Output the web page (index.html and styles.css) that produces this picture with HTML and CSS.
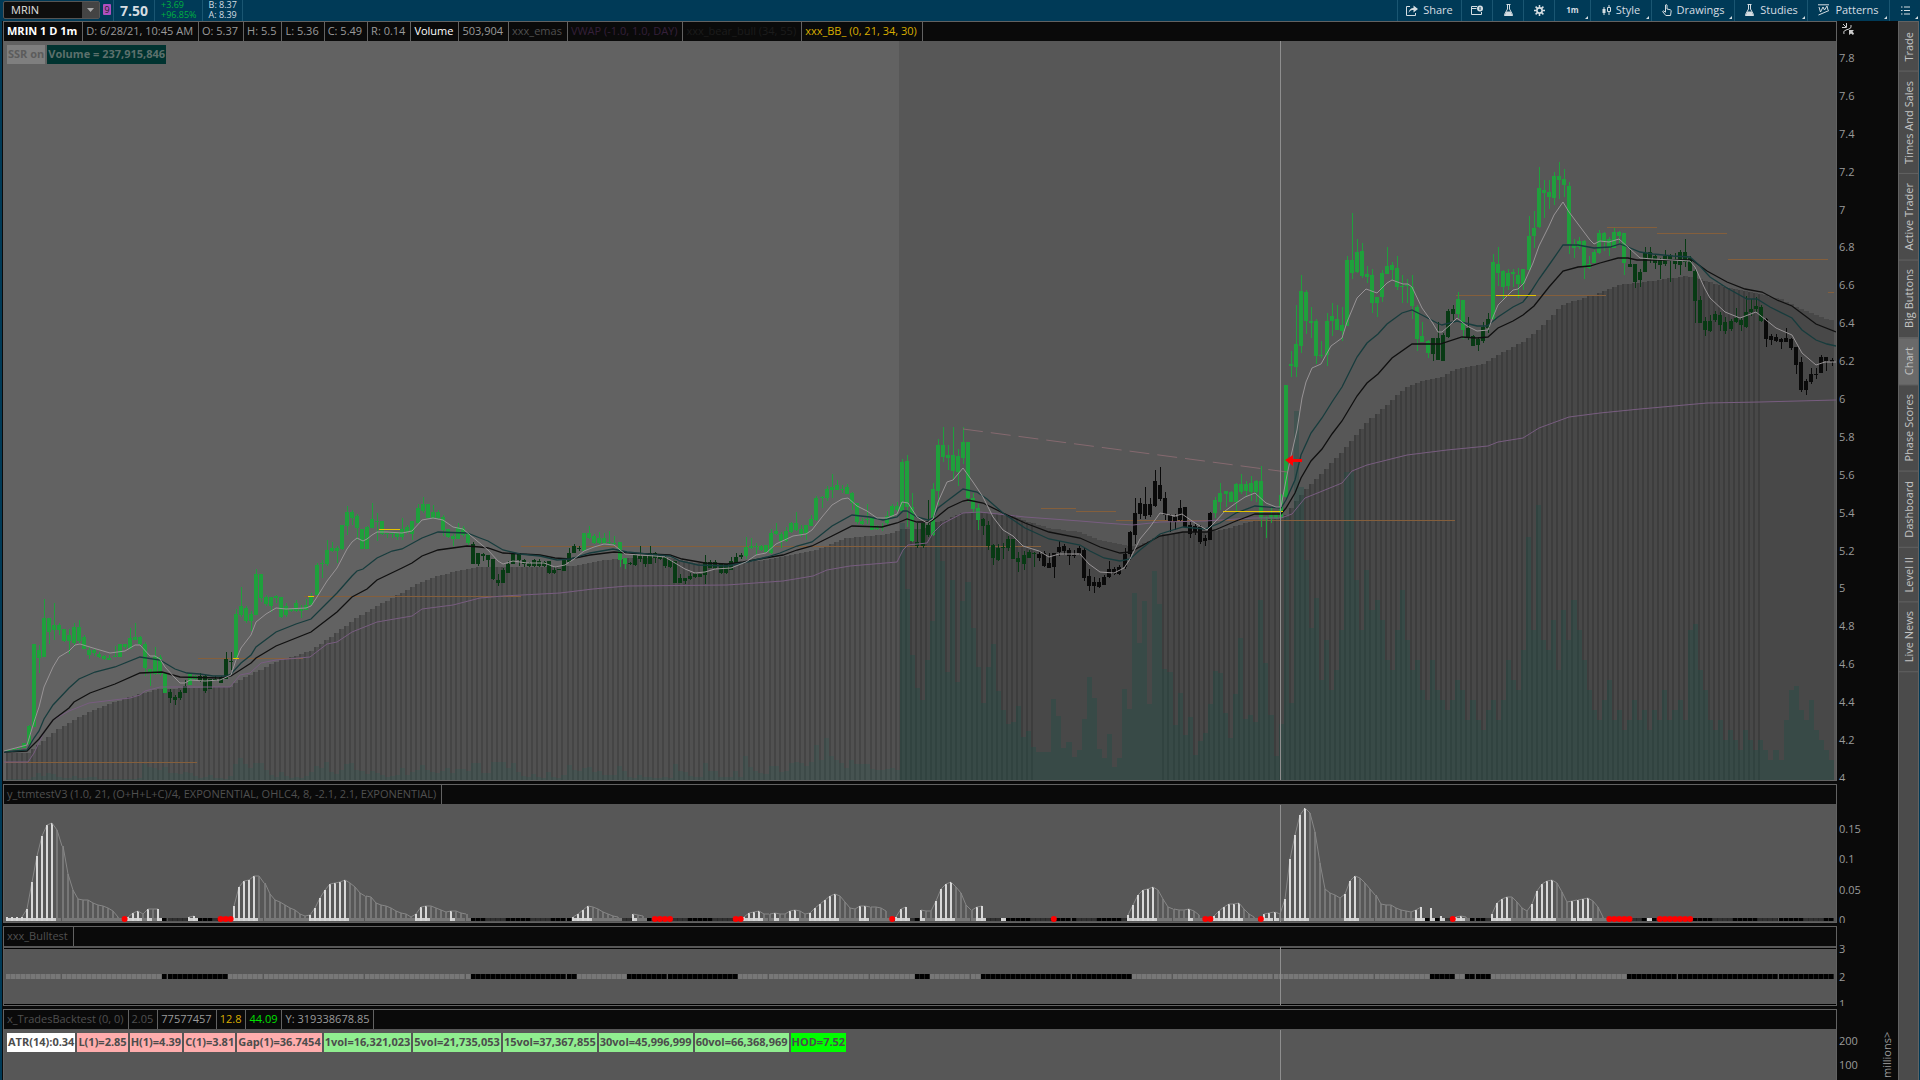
FILE: index.html
```html
<!DOCTYPE html>
<html lang="en">
<head>
    <meta charset="UTF-8">
    <meta name="viewport" content="width=device-width, initial-scale=1.0">
    <title>MRIN 1 D 1m</title>
    <link rel="stylesheet" href="styles.css">
</head>
<body>
    <header class="topbar">
        <div class="symbol-box">
            <input type="text" class="symbol" value="MRIN" aria-label="Symbol">
            <button class="symbol-drop" aria-label="Symbol list"><svg width="7" height="4" viewBox="0 0 7 4"><path d="M0 0h7L3.500 4z" fill="#aaa"/></svg></button>
        </div>
        <button class="link-badge" aria-label="Link group">9</button>
        <div class="last-price">7.50</div>
        <div class="quote quote-change"><span>+3.69</span><span>+96.85%</span></div>
        <div class="quote"><span>B: 8.37</span><span>A: 8.39</span></div>
        <nav class="tools">
            <button class="tool share">
                <svg width="12" height="11" viewBox="0 0 12 11"><path d="M4 1.500H.5v9h9V8" fill="none" stroke="#d5dde2"/><path d="M2.500 8C3 4.500 5 3 7.500 3V.5L12 4 7.500 7.500V5C5.500 5 4 5.500 2.500 8z" fill="#d5dde2"/></svg>
                Share
            </button>
            <button class="tool" aria-label="Snapshot">
                <svg width="12" height="11" viewBox="0 0 12 11"><path d="M6 1.500H.5v8h10V7M.5 3.500h5" fill="none" stroke="#d5dde2"/><circle cx="9" cy="3.500" r="3" fill="#d5dde2"/><path d="M9 2v3" stroke="#003a57"/></svg>
            </button>
            <button class="tool" aria-label="Studies list">
                <svg width="11" height="12" viewBox="0 0 11 12"><path d="M3.500.5h4M4.500.5v4.500L1.500 10.500v1h8v-1L6.500 5V.5" fill="none" stroke="#d5dde2"/><path d="M3.500 7.500h4l2 4h-8z" fill="#d5dde2"/></svg>
            </button>
            <button class="tool" aria-label="Settings">
                <svg width="11" height="11" viewBox="0 0 11 11"><path d="M5.500 0v11M0 5.500h11M1.600 1.600l7.800 7.800M9.400 1.600L1.600 9.400" stroke="#d5dde2" stroke-width="1.500"/><circle cx="5.500" cy="5.500" r="2.600" fill="#003a57" stroke="#d5dde2" stroke-width="1.600"/></svg>
            </button>
            <button class="tool corner timeframe">1m</button>
            <button class="tool corner style">
                <svg width="9" height="11" viewBox="0 0 9 11"><path d="M2 2v8M7 0v10" stroke="#d5dde2"/><path d="M.5 4h3v4h-3z" fill="#d5dde2"/><path d="M5.500 2.500h3v4h-3z" fill="#003a57" stroke="#d5dde2"/></svg>
                Style
            </button>
            <button class="tool corner drawings">
                <svg width="10" height="12" viewBox="0 0 10 12"><path d="M3.500 8V1q.8-1 1.500 0v4l3.500.8q.8.400.7 1.200L8.500 11.500H3.800L.6 7.500q.6-1 1.400-.4l1.500 1.400" fill="none" stroke="#d5dde2"/></svg>
                Drawings
            </button>
            <button class="tool corner studies">
                <svg width="11" height="12" viewBox="0 0 11 12"><path d="M3.500.5h4M4.500.5v4.500L1.500 10.500v1h8v-1L6.500 5V.5" fill="none" stroke="#d5dde2"/><path d="M3.500 7.500h4l2 4h-8z" fill="#d5dde2"/></svg>
                Studies
            </button>
            <button class="tool corner patterns">
                <svg width="12" height="12" viewBox="0 0 12 12"><path d="M0 .8h11M.5 11L11 6.500M1 3l1.500 5L5 3l1.500 3L9 2l1 4" fill="none" stroke="#d5dde2"/></svg>
                Patterns
            </button>
            <button class="tool corner" aria-label="Menu">
                <svg width="9" height="9" viewBox="0 0 9 9"><path d="M0 1h1.500M0 4.500h1.500M0 8h1.500M3 1h6M3 4.500h6M3 8h6" stroke="#d5dde2"/></svg>
            </button>
        </nav>
    </header>

    <div class="workspace">
        <main class="panels">
            <!-- price -->
            <section class="panel panel-price">
                <div class="pane">
                    <div class="info">
                        <span class="white bold">MRIN 1 D 1m</span>
                        <span>D: 6/28/21, 10:45 AM</span>
                        <span>O: 5.37</span>
                        <span>H: 5.5</span>
                        <span>L: 5.36</span>
                        <span>C: 5.49</span>
                        <span>R: 0.14</span>
                        <span class="white">Volume</span>
                        <span>503,904</span>
                        <span class="dim">xxx_emas</span>
                        <span class="purple">VWAP (-1.0, 1.0, DAY)</span>
                        <span class="faint">xxx_bear_bull (34, 55)</span>
                        <span class="yellow">xxx_BB_ (0, 21, 34, 30)</span>
                    </div>
                    <div class="plot">
                        <svg id="price" viewBox="4 41 1832 739" preserveAspectRatio="none"></svg>
                        <div class="labels">
                            <span class="ssr">SSR on</span>
                            <span class="vol">Volume = 237,915,846</span>
                        </div>
                    </div>
                </div>
                <div class="axis">
                    <svg class="axis-icon" width="12" height="12" viewBox="0 0 12 12"><path d="M1 1l3 3M4.500 0v4.500H0M2 11q-1.500-3 2-4l3-1q3-1 2-4" fill="none" stroke="#ccc"/><path d="M7 7h5L10.500 8.500 12 10.500 11 12 9 10.500 7 12z" fill="#ccc"/></svg>
                    <ul class="scale">
                        <li>7.8</li><li>7.6</li><li>7.4</li><li>7.2</li><li>7</li>
                        <li>6.8</li><li>6.6</li><li>6.4</li><li>6.2</li><li>6</li>
                        <li>5.8</li><li>5.6</li><li>5.4</li><li>5.2</li><li>5</li>
                        <li>4.8</li><li>4.6</li><li>4.4</li><li>4.2</li><li>4</li>
                    </ul>
                </div>
            </section>

            <!-- squeeze histogram -->
            <section class="panel panel-ttm">
                <div class="pane">
                    <div class="info"><span class="dim">y_ttmtestV3 (1.0, 21, (O+H+L+C)/4, EXPONENTIAL, OHLC4, 8, -2.1, 2.1, EXPONENTIAL)</span></div>
                    <div class="plot"><svg id="ttm" viewBox="4 804 1832 118" preserveAspectRatio="none"></svg></div>
                </div>
                <div class="axis">
                    <ul class="scale"><li>0.15</li><li>0.1</li><li>0.05</li><li>0</li></ul>
                </div>
            </section>

            <!-- bull test -->
            <section class="panel panel-bull">
                <div class="pane">
                    <div class="info"><span class="dim">xxx_Bulltest</span></div>
                    <div class="plot"><svg id="bull" viewBox="4 946 1832 59" preserveAspectRatio="none"></svg></div>
                </div>
                <div class="axis">
                    <ul class="scale"><li>3</li><li>2</li><li>1</li></ul>
                </div>
            </section>

            <!-- backtest -->
            <section class="panel panel-trades">
                <div class="pane">
                    <div class="info">
                        <span class="dim">x_TradesBacktest (0, 0)</span>
                        <span class="dim">2.05</span>
                        <span>77577457</span>
                        <span class="yellow">12.8</span>
                        <span class="green">44.09</span>
                        <span>Y: 319338678.85</span>
                    </div>
                    <div class="plot">
                        <svg id="trades" viewBox="4 1029 1832 51" preserveAspectRatio="none"></svg>
                        <div class="labels">
                            <span class="plain">ATR(14):0.34</span>
                            <span class="pink">L(1)=2.85</span>
                            <span class="pink">H(1)=4.39</span>
                            <span class="pink">C(1)=3.81</span>
                            <span class="pink">Gap(1)=36.7454</span>
                            <span class="mint">1vol=16,321,023</span>
                            <span class="mint">5vol=21,735,053</span>
                            <span class="mint">15vol=37,367,855</span>
                            <span class="mint">30vol=45,996,999</span>
                            <span class="mint">60vol=66,368,969</span>
                            <span class="lime">HOD=7.52</span>
                        </div>
                    </div>
                </div>
                <div class="axis">
                    <ul class="scale"><li>200</li><li>100</li></ul>
                    <div class="unit">millions&gt;</div>
                </div>
            </section>
        </main>

        <nav class="side-tabs">
            <button>Trade</button>
            <button>Times And Sales</button>
            <button>Active Trader</button>
            <button>Big Buttons</button>
            <button class="active">Chart</button>
            <button>Phase Scores</button>
            <button>Dashboard</button>
            <button>Level II</button>
            <button>Live News</button>
        </nav>
    </div>

    <script src="script.js"></script>
</body>
</html>
```
FILE: styles.css
```css
* {
    box-sizing: border-box;
}
body {
    margin: 0;
    height: 100vh;
    overflow: hidden;
    display: flex;
    flex-direction: column;
    background-color: #003a57;
    color: #9a9a9a;
    font-family: 'Open Sans', 'Noto Sans', sans-serif;
    font-size: 11px;
    line-height: 14px;
}
button, input {
    font: inherit;
    color: inherit;
    margin: 0;
    padding: 0;
    border: none;
    background: none;
}

/* top bar */
.topbar {
    height: 21px;
    flex: none;
    display: flex;
    align-items: stretch;
    background-color: #003a57;
    color: #d5dde2;
}
.symbol-box {
    width: 97px;
    height: 18px;
    margin: 1px 0 0 3px;
    display: flex;
    border: 1px solid #555;
    border-radius: 2px;
    background-color: #0e0e0e;
}
.symbol {
    flex: 1;
    min-width: 0;
    padding-left: 7px;
    color: #e0e0e0;
}
.symbol-drop {
    width: 17px;
    background-color: #444;
    display: flex;
    align-items: center;
    justify-content: center;
}
.link-badge {
    width: 8px;
    height: 11px;
    margin: 4px 0 0 3px;
    background-color: #b04fc0;
    color: #222;
    font-size: 9px;
    line-height: 11px;
    border-radius: 1px;
}
.last-price {
    margin-left: 2px;
    padding: 0 6px;
    font-size: 14px;
    font-weight: bold;
    line-height: 22px;
    border-left: 1px solid #1a5672;
}
.quote {
    display: flex;
    flex-direction: column;
    padding: 0 5px 0 6px;
    font-size: 9px;
    line-height: 10px;
    border-left: 1px solid #1a5672;
}
.quote:last-of-type {
    border-right: 1px solid #1a5672;
}
.quote-change {
    color: #00b140;
}
.tools {
    margin-left: auto;
    display: flex;
}
.tool {
    position: relative;
    width: 31px;
    display: flex;
    align-items: center;
    justify-content: center;
    gap: 5px;
    padding-bottom: 1px;
    border-left: 1px solid #1a5672;
}
.corner::after {
    content: "";
    position: absolute;
    right: 2px;
    bottom: 2px;
    border-left: 3px solid transparent;
    border-bottom: 3px solid #d5dde2;
}
.share { width: 64px; }
.timeframe {
    width: 36px;
    font-size: 8px;
    font-weight: bold;
}
.style { width: 61px; }
.drawings { width: 83px; }
.studies { width: 73px; }
.patterns { width: 82px; }

/* chart panels */
.workspace {
    flex: 1;
    min-height: 0;
    display: flex;
    padding: 0 1px 0 2px;
}
.panels {
    flex: 1;
    min-width: 0;
    display: flex;
    flex-direction: column;
    gap: 3px;
    padding-left: 1px;
    background-color: #0a0a0a;
}
.panel {
    display: flex;
    flex: none;
    overflow: hidden;
}
.panel-price {
    flex: 1;
    min-height: 0;
}
.panel-ttm { height: 139px; }
.panel-bull { height: 80px; }
.panel-trades { height: 71px; }
.pane {
    flex: 1;
    min-width: 0;
    display: flex;
    flex-direction: column;
    border: 1px solid #626262;
}
.panel-trades .pane {
    border-bottom: none;
}
.info {
    height: 19px;
    flex: none;
    display: flex;
    background-color: #0a0a0a;
    line-height: 18px;
    white-space: nowrap;
}
.info span {
    padding: 0 5px 0 3px;
    border-right: 1px solid #626262;
}
.panel-trades .info span {
    padding-right: 4px;
}
.info .white { color: #fff; }
.info .bold { font-weight: bold; }
.info .dim { color: #505050; }
.info .purple { color: #35203a; }
.info .faint { color: #1c1c1c; }
.info .yellow { color: #d9ad00; }
.info .green { color: #00e000; }
.plot {
    position: relative;
    flex: 1;
    min-height: 0;
    background-color: #575757;
}
.plot svg {
    display: block;
    width: 100%;
    height: 100%;
}
.labels {
    position: absolute;
    top: 4px;
    left: 3px;
    display: flex;
    gap: 2px;
    font-weight: bold;
    line-height: 18px;
    white-space: nowrap;
    color: #4c4c4c;
}
.labels span {
    height: 19px;
    padding: 0 1px;
}
.labels .ssr {
    background-color: #7f7f7f;
    color: #5c5c5c;
}
.labels .vol {
    background-color: #003330;
    color: #5c706c;
}
.plain { background-color: #fff; }
.pink { background-color: #ffadad; }
.mint { background-color: #90ee90; }
.lime { background-color: #00ff00; }

/* value axis */
.axis {
    width: 61px;
    flex: none;
    display: flex;
    flex-direction: column;
    background-color: #0a0a0a;
}
.axis-icon {
    flex: none;
    margin: 2px 0 0 5px;
}
.scale {
    flex: 1;
    margin: 0;
    padding: 0 0 0 2px;
    list-style: none;
    display: flex;
    flex-direction: column;
    justify-content: space-between;
}
.panel-price .scale { margin: 16px 0 -4px; }
.panel-ttm .scale { margin: 38px 0 -4px; }
.panel-bull .scale { margin: 16px 0 -5px; }
.panel-trades .axis { flex-direction: row; }
.panel-trades .scale {
    margin-top: 25px;
    justify-content: flex-start;
    gap: 10px;
}
.unit {
    margin: 23px 4px 0 0;
    writing-mode: vertical-rl;
    transform: rotate(180deg);
    text-align: right;
}

/* right tabs */
.side-tabs {
    width: 21px;
    flex: none;
    display: flex;
    flex-direction: column;
    padding-top: 1px;
    background-color: #4b4b4b;
    border: 1px solid #626262;
    border-bottom: none;
    color: #c4c4c4;
}
.side-tabs button {
    writing-mode: vertical-rl;
    transform: rotate(180deg);
    line-height: 19px;
    padding: 9px 0;
    border-top: 1px solid #626262;
}
.side-tabs .active {
    background-color: #6a6a6a;
}
```
FILE: script.js
```js
const STEP = 5.05;
const barX = i => 8.45 + i * STEP;

// high, body top, body bottom, low for each minute bar
const candles = `
750 750 750 750,749 749 750 750,748 748 749 749,743 743 748 748,725 726 744 745,644 644 727 727,645 650 658 673,599 618 657 657,
618 618 632 644,603 625 630 640,623 625 630 635,629 629 641 642,629 635 641 654,623 627 643 645,620 627 641 643,635 637 649 649,
647 650 655 659,649 650 653 656,652 654 657 658,655 656 659 660,655 658 660 660,646 656 657 657,644 644 657 657,644 644 647 649,
628 638 649 649,623 637 640 640,636 637 644 646,642 644 668 676,669 669 673 686,647 656 674 675,655 657 674 676,673 673 693 693,
689 692 698 703,695 697 700 705,690 692 698 700,680 686 693 693,673 674 685 685,675 676 679 681,673 676 681 682,675 676 691 693,
679 679 689 689,676 679 681 681,676 677 683 683,652 659 679 679,652 661 662 670,609 614 659 659,587 606 615 617,606 608 621 623,
611 614 621 631,569 574 615 615,574 574 598 602,595 597 604 606,597 597 606 612,595 596 598 603,597 597 617 618,603 606 615 617,
608 609 611 612,600 603 611 612,605 609 611 618,599 605 610 610,593 596 605 606,563 565 595 595,560 563 564 578,540 550 564 566,
542 548 551 552,546 548 551 563,525 525 549 550,506 512 526 535,510 512 518 525,514 516 528 540,529 529 549 549,526 527 549 549,
503 519 528 528,513 521 522 541,521 521 534 535,533 533 534 538,532 533 534 538,532 533 537 540,518 529 537 540,525 527 532 534,
521 521 534 540,504 508 523 524,497 504 511 513,504 504 518 518,505 512 518 519,510 512 518 519,515 517 530 536,529 529 537 538,
534 536 539 546,523 527 539 539,526 528 535 537,533 533 543 545,542 544 564 564,553 553 564 566,553 554 556 561,555 555 560 567,
559 559 579 580,574 580 583 586,568 570 583 583,561 564 573 573,553 553 564 564,553 553 560 566,559 560 564 567,562 563 566 567,
559 560 566 567,559 561 566 567,561 562 566 567,561 561 573 574,567 570 573 574,569 569 570 570,559 559 571 571,548 553 562 563,
544 546 553 553,546 548 549 551,533 533 551 551,526 533 538 539,534 536 543 544,532 538 543 544,533 538 543 544,531 542 543 545,
536 543 544 545,542 542 560 567,558 558 564 569,562 563 564 565,553 555 565 566,546 556 559 562,556 556 564 567,546 553 564 564,
552 553 558 563,555 555 559 560,556 557 566 568,560 560 567 568,561 561 583 583,574 578 583 583,578 578 581 584,573 576 579 580,
573 574 577 578,574 574 577 577,555 562 575 584,560 562 568 568,560 562 568 569,563 563 573 574,564 564 573 574,557 561 570 570,
553 557 563 563,553 555 557 559,537 547 556 559,538 546 548 549,543 546 547 555,545 546 550 551,545 545 552 552,529 533 553 554,
523 531 534 535,532 534 541 548,527 531 541 542,522 523 532 533,512 523 530 531,525 529 534 537,525 525 533 540,515 519 526 526,
496 498 520 521,496 497 498 508,486 489 498 501,474 487 490 498,480 485 490 490,485 489 490 493,484 487 494 494,492 493 503 510,
503 503 522 524,518 521 524 525,504 519 520 524,518 518 530 530,525 526 529 530,523 527 528 531,511 516 523 526,504 506 516 517,
502 506 510 512,459 462 511 512,455 461 507 527,493 507 541 542,523 542 546 548,523 523 546 548,500 525 535 537,483 489 535 536,
439 445 491 505,427 445 457 462,445 455 458 470,427 455 471 480,449 456 472 486,427 442 458 464,442 442 498 502,493 498 509 513,
504 508 520 530,518 519 526 535,521 525 546 550,544 545 558 565,544 548 560 561,543 547 548 559,536 539 548 551,539 539 559 559,
552 558 562 572,551 555 564 570,550 552 558 558,552 553 554 567,551 554 558 561,551 553 566 567,553 563 568 568,553 553 567 578,
541 547 552 556,544 546 551 555,548 550 556 565,550 555 556 558,546 548 553 555,548 550 578 581,569 576 586 591,577 582 586 593,
578 582 587 588,575 577 585 585,561 569 577 578,567 569 574 575,565 567 574 575,548 554 567 569,531 532 554 560,498 513 535 544,
498 503 514 519,487 504 516 519,498 504 515 517,470 481 506 507,467 485 499 501,492 498 515 520,514 515 521 532,514 517 522 530,
500 508 520 521,507 507 527 528,522 525 534 538,524 526 532 535,525 527 542 544,535 538 541 546,512 513 540 540,497 500 513 518,
483 493 502 510,491 491 494 507,491 492 502 502,483 484 502 513,474 484 492 494,481 484 491 496,476 483 492 501,480 481 492 502,
466 481 518 527,516 517 518 538,508 515 518 523,513 515 518 519,494 495 518 518,385 385 497 498,351 364 366 377,305 344 367 377,
275 291 346 353,290 292 321 334,307 321 323 338,319 321 356 364,341 355 356 358,313 321 355 366,303 316 321 336,305 319 330 330,
307 325 331 341,256 260 326 326,213 260 273 279,239 252 272 273,243 251 276 278,266 274 277 283,269 275 303 313,297 297 303 317,
270 273 297 302,247 266 274 274,262 265 270 280,256 268 287 290,275 286 287 303,279 285 286 303,275 287 306 319,305 307 339 351,
322 336 342 342,340 341 353 358,338 338 354 361,322 338 360 360,333 335 361 361,309 311 337 338,305 309 314 320,292 299 314 318,
300 300 330 339,317 328 338 340,335 336 346 346,337 339 345 351,322 327 341 343,313 319 328 333,254 262 319 320,247 264 273 286,
270 271 287 300,269 273 286 290,269 272 274 287,268 275 284 298,269 269 284 290,216 236 270 271,211 228 236 248,167 188 227 228,
180 190 193 218,180 192 197 209,172 176 198 205,162 176 180 199,169 179 185 197,182 186 244 254,239 244 248 258,237 241 247 249,
240 241 266 279,256 264 268 269,250 252 263 263,230 233 253 254,232 233 242 251,237 239 247 256,228 232 248 248,231 232 236 244,
233 233 263 275,250 264 267 267,264 264 282 288,269 272 280 287,247 253 272 272,247 252 259 263,255 256 263 269,258 260 265 279,
250 256 264 266,254 256 260 282,253 260 264 269,250 252 265 275,239 252 262 267,256 258 271 271,269 271 301 323,296 300 323 323,
317 321 330 336,315 321 331 332,311 314 320 322,312 315 325 331,317 322 331 334,319 321 329 331,308 318 322 323,318 320 325 331,
296 312 327 328,299 309 312 316,297 306 309 312,305 307 321 322,318 319 339 347,334 336 340 345,334 337 341 342,338 339 342 349,
328 338 342 342,338 339 348 350,347 347 365 374,357 362 390 392,379 381 390 395,368 374 382 384,368 374 375 379,355 357 373 373,
357 357 361 371,358 360 362 366`.split(',').map(c => c.trim().split(' ').map(Number));

// bars that are not bright green
const darkRanges = [[32, 35], [38, 44], [92, 113], [123, 145], [180, 182], [193, 203], [282, 286], [289, 293], [321, 347]];
const blackRanges = [[204, 238], [348, 361]];

// volume bar heights
const volume = [
    1, 1, 1, 1, 1, 3, 7, 4, 7, 6, 3, 2, 2, 4, 2, 2, 3, 3, 1, 1, 1, 1, 1, 1, 1, 1, 2, 16, 13, 12,
    10, 13, 7, 7, 6, 8, 7, 4, 2, 3, 5, 2, 2, 1, 4, 16, 22, 16, 12, 17, 17, 10, 5, 3, 8, 4, 2, 3, 2, 4,
    8, 14, 12, 18, 8, 6, 10, 16, 17, 10, 9, 6, 9, 7, 5, 3, 4, 5, 12, 5, 8, 10, 15, 10, 8, 7, 9, 12, 7, 11,
    11, 9, 17, 17, 7, 7, 18, 18, 18, 12, 17, 8, 4, 3, 6, 3, 2, 8, 3, 2, 5, 15, 10, 9, 12, 13, 8, 9, 5, 5,
    5, 14, 9, 3, 2, 5, 3, 3, 2, 2, 3, 2, 16, 9, 8, 4, 3, 3, 17, 9, 9, 3, 3, 3, 9, 3, 24, 13, 9, 7,
    6, 14, 14, 8, 9, 17, 18, 17, 14, 18, 35, 20, 42, 24, 20, 17, 12, 20, 16, 16, 16, 11, 10, 10, 11, 12, 10, 257, 191, 125,
    92, 80, 120, 159, 253, 219, 108, 200, 98, 179, 198, 152, 113, 77, 113, 136, 89, 70, 56, 58, 74, 43, 49, 33, 28, 28,
    28, 81, 64, 32, 38, 23, 30, 61, 103, 82, 31, 22, 46, 13, 22, 91, 71, 187, 137, 179, 76, 209, 176, 111, 108, 55,
    87, 45, 63, 25, 39, 47, 76, 109, 107, 67, 42, 86, 142, 61, 65, 58, 180, 117, 65, 24, 56, 263, 77, 369, 293, 220,
    152, 182, 100, 140, 90, 110, 150, 308, 308, 200, 150, 210, 170, 180, 160, 120, 110, 150, 190, 140, 110, 120, 90, 80, 120, 90, 80, 70,
    80, 100, 90, 60, 80, 60, 50, 70, 80, 60, 80, 120, 100, 90, 130, 243, 150, 275, 140, 130, 160, 110, 170, 140, 180, 150,
    120, 90, 70, 60, 80, 100, 60, 70, 50, 60, 80, 60, 70, 50, 70, 60, 90, 60, 70, 80, 60, 150, 156, 110, 90, 60,
    50, 60, 40, 50, 40, 30, 50, 40, 30, 40, 30, 20, 30, 20, 60, 90, 94, 70, 60, 80, 50, 40, 30, 20
];

// moving averages and cloud edge
const cloud = '4,753 29,753 44,741 59,729 69,723 89,712 115,702 140,694 160,689 230,687 241,680 256,672 276,662 311,651 337,633 357,618 377,606 402,593 422,582 438,576 458,571 480,567 540,567 577,566 593,562 613,559 643,558 673,558 693,563 727,564 760,561 793,555 812,551 827,546 843,539 857,537 890,534 902,529 927,529 933,523 947,520 963,513 983,513 1013,515 1025,521 1050,528 1080,532 1100,540 1117,544 1133,547 1147,542 1160,535 1183,532 1207,532 1220,530 1237,526 1253,521 1281,518 1287,515 1295,502 1305,490 1322,473 1342,453 1367,423 1392,400 1407,387 1422,381 1443,377 1457,369 1483,364 1498,355 1523,342 1537,332 1563,305 1578,300 1600,293 1619,285 1645,282 1665,279 1687,276 1707,281 1727,287 1760,294 1780,299 1803,310 1820,317 1836,321';
const fast = '4,751 27,745 34,722 39,707 44,687 53,667 59,657 69,651 75,645 80,644 93,648 110,653 125,651 135,645 140,645 150,656 155,656 160,659 165,667 175,678 180,683 185,683 190,680 205,681 220,680 231,675 236,660 241,648 251,635 256,622 266,614 276,608 286,609 306,608 311,606 317,597 327,581 337,568 347,549 352,542 357,538 363,541 367,539 372,535 377,532 387,532 402,533 412,531 422,520 433,518 443,520 453,527 463,529 470,535 488,550 498,561 503,564 513,561 527,563 544,563 555,567 565,565 574,559 584,551 594,547 604,544 614,545 625,554 640,555 655,556 665,557 675,563 685,569 695,573 705,572 715,569 731,568 746,562 756,555 766,553 776,544 793,536 806,534 812,530 822,517 832,505 842,499 848,498 857,506 867,511 877,518 887,518 897,514 902,502 908,503 917,517 927,523 933,519 938,502 947,482 953,480 963,468 973,482 983,497 993,517 1003,530 1013,536 1023,546 1039,551 1049,557 1059,554 1080,554 1089,564 1100,572 1114,573 1124,568 1130,559 1140,539 1150,527 1160,513 1175,516 1182,514 1195,523 1207,530 1215,522 1225,511 1236,503 1245,497 1255,493 1266,503 1276,507 1281,507 1286,480 1291,456 1297,430 1302,398 1306,382 1312,368 1321,364 1331,346 1342,338 1347,322 1357,298 1366,289 1377,293 1387,283 1392,280 1403,284 1408,284 1412,287 1422,308 1432,322 1438,332 1442,332 1450,325 1457,318 1467,326 1477,331 1488,330 1493,317 1498,305 1513,290 1518,289 1524,283 1533,263 1539,246 1549,226 1554,215 1563,202 1569,212 1578,224 1590,240 1594,244 1600,241 1609,242 1619,239 1629,248 1640,258 1653,259 1690,261 1695,267 1705,289 1710,298 1725,312 1740,318 1756,312 1766,320 1776,328 1792,335 1802,353 1816,365 1825,362 1836,362';
const mid = '4,752 27,750 34,738 39,731 44,719 53,705 69,688 79,679 95,672 115,667 140,657 160,660 175,669 187,673 200,674 213,676 226,676 231,674 241,663 251,655 256,647 276,632 296,624 311,619 327,603 337,593 352,576 357,571 363,569 377,558 392,551 402,549 422,538 438,532 467,533 480,538 488,541 503,550 520,554 540,556 557,560 570,559 590,553 613,549 627,552 647,554 670,556 680,561 698,565 727,566 743,563 767,557 780,553 797,546 812,542 832,526 852,515 870,517 883,520 897,517 903,511 907,511 917,517 928,520 933,518 938,508 947,501 963,489 977,492 987,499 1003,513 1025,528 1049,539 1080,545 1090,551 1104,558 1120,561 1130,559 1140,550 1160,534 1183,527 1205,529 1220,523 1236,513 1255,506 1281,508 1286,500 1295,480 1301,455 1311,433 1322,418 1332,402 1342,387 1357,357 1367,343 1378,334 1387,324 1402,313 1412,310 1422,315 1437,323 1442,325 1457,321 1477,326 1487,326 1498,317 1513,307 1523,302 1530,293 1539,279 1549,265 1563,245 1578,245 1594,248 1610,247 1620,244 1628,247 1640,252 1653,254 1673,256 1690,257 1700,266 1710,277 1727,288 1747,299 1757,299 1770,307 1792,318 1802,330 1816,340 1827,344 1836,346';
const slow = '4,752 27,751 29,749 39,739 53,720 69,708 74,702 90,693 115,684 140,673 162,672 180,677 220,678 231,676 251,663 256,658 276,646 311,632 337,612 352,597 367,589 377,580 402,568 412,563 422,556 438,550 467,546 480,547 488,548 503,553 540,555 555,558 570,559 590,555 614,552 627,553 670,555 682,559 705,563 727,564 743,562 771,557 783,555 797,550 812,546 832,536 852,526 882,527 897,523 907,519 917,522 930,522 937,517 948,508 963,501 968,500 983,503 1003,513 1025,523 1049,532 1080,538 1100,547 1120,553 1130,552 1147,543 1160,536 1183,532 1207,532 1215,530 1236,521 1255,514 1281,514 1286,508 1295,493 1301,478 1311,461 1322,449 1332,434 1342,421 1357,396 1367,383 1378,374 1392,358 1412,344 1440,344 1462,337 1477,338 1488,337 1498,328 1513,321 1523,315 1534,306 1549,287 1563,271 1578,267 1590,266 1600,263 1618,258 1628,258 1637,260 1692,260 1707,271 1727,282 1745,289 1762,292 1777,300 1792,306 1816,324 1836,332';
const vwap = '4,762 28,762 34,753 44,732 53,720 69,711 89,703 130,698 140,695 145,691 160,687 230,687 240,675 250,673 261,663 276,660 310,657 327,644 337,642 352,632 377,622 412,616 422,609 453,605 480,598 503,596 560,593 593,589 627,586 727,585 783,581 813,576 827,570 850,566 897,562 903,550 908,545 927,543 933,533 942,524 963,513 980,512 1025,517 1080,521 1104,523 1133,525 1160,522 1205,521 1253,518 1281,518 1292,514 1305,498 1320,492 1342,483 1352,471 1367,465 1407,455 1447,450 1488,446 1498,442 1523,438 1539,428 1569,417 1600,413 1640,409 1707,403 1760,402 1836,400';

// x1, x2, y
const orange = [[5, 197, 762], [198, 303, 658], [304, 521, 596], [521, 1041, 546], [1041, 1076, 508], [1076, 1116, 511], [1116, 1455, 520], [1456, 1606, 295], [1607, 1657, 227], [1657, 1727, 233], [1728, 1828, 259], [1828, 1834, 292]];
const yellow = [[233, 239, 658], [308, 314, 596], [379, 400, 529], [1223, 1283, 511], [1496, 1536, 295]];

// squeeze histogram: first bar, colour (w/g), tops
const humps = [
    [4, 'w', [909, 882, 856, 836, 825, 823]], [10, 'g', [830, 846, 874, 890, 899, 900, 900, 903, 905, 906, 908, 911, 917]],
    [24, 'w', [917, 913, 911]], [27, 'g', [914]], [28, 'w', [909]], [29, 'g', [909]], [30, 'w', [909]],
    [36, 'w', [917]], [37, 'w', [916]],
    [45, 'w', [906, 887, 881, 880, 876]], [50, 'g', [876, 883, 894, 900, 902, 905, 908, 910, 914, 916]],
    [60, 'w', [915, 908, 898, 890, 884, 883, 882, 880]], [68, 'g', [883, 887, 893, 896, 897, 903, 905, 906, 908, 911, 913, 914, 917]],
    [81, 'w', [914, 907, 906]], [84, 'g', [906, 908, 910, 912]], [88, 'w', [911]], [89, 'g', [911, 913, 914]],
    [112, 'w', [917, 914, 910, 906]], [116, 'g', [907, 909, 912, 914, 916, 917]], [124, 'w', [914]], [125, 'g', [915, 916]],
    [146, 'w', [917, 913, 912, 911]], [150, 'g', [914, 914]], [152, 'w', [913]], [153, 'g', [914, 914]], [155, 'w', [911, 910]],
    [157, 'g', [911, 914]], [159, 'w', [913, 908, 904, 900, 896, 894]], [165, 'g', [896, 902, 908, 909]], [169, 'w', [906, 906]],
    [171, 'g', [907, 907, 908, 911]], [176, 'w', [917, 909, 907]], [181, 'w', [910]], [182, 'g', [911, 911]],
    [184, 'w', [901, 889, 884, 882]], [188, 'g', [887, 893, 905, 910]], [192, 'w', [907, 906]], [197, 'w', [918]],
    [222, 'w', [915, 905, 895, 890, 889, 887]], [228, 'g', [890, 899, 907, 909, 910, 910]], [234, 'w', [909]], [235, 'g', [911, 915]],
    [239, 'w', [916, 911, 907, 904, 904, 903]], [245, 'g', [909, 914, 917]], [249, 'w', [914, 913, 912]], [252, 'g', [914]],
    [253, 'w', [899, 859, 835, 815, 808]], [258, 'g', [813, 832, 863, 889, 893, 895, 898]], [265, 'w', [894, 881, 876]],
    [268, 'g', [878, 883, 889, 895, 904, 905, 905, 908, 910, 911, 912]], [279, 'w', [910, 907]], [282, 'w', [908]], [284, 'w', [916]],
    [287, 'w', [917, 916]], [289, 'g', [917]], [294, 'w', [914, 903, 899, 897]], [298, 'g', [897, 902, 908, 911]],
    [302, 'w', [904, 891, 884, 881, 880]], [307, 'g', [883, 892, 902]], [310, 'w', [901, 900, 899, 898]], [314, 'g', [901, 907, 917]],
    [325, 'w', [918]]
];
const redDots = [23, 42, 43, 44, 128, 129, 130, 131, 144, 145, 175, 207, 237, 238, 248, 286, 317, 318, 319, 320, 321, 327, 328, 329, 330, 331, 332, 333];
const bearRuns = [[31, 43], [92, 112], [123, 144], [180, 182], [193, 222], [282, 286], [289, 293], [321, 361]];

const rect = (x, y, w, h, fill) => `<rect x="${x}" y="${y}" width="${w}" height="${h}" fill="${fill}"/>`;
const line = (points, color, width = 1, extra = '') => `<polyline points="${points}" fill="none" stroke="${color}" stroke-width="${width}" ${extra}/>`;
const within = (i, ranges) => ranges.some(r => i >= r[0] && i <= r[1]);
const crosshair = (top, bottom) => rect(1280, top, 1, bottom - top, '#8e8e8e');

// height of the cloud edge at a given x
const cloudPoints = cloud.split(' ').map(p => p.split(',').map(Number));
function cloudY(x) {
    for (let k = 1; k < cloudPoints.length; k++) {
        const [x0, y0] = cloudPoints[k - 1];
        const [x1, y1] = cloudPoints[k];
        if (x <= x1) return Math.round(y0 + (y1 - y0) * (x - x0) / (x1 - x0));
    }
    return 321;
}

function drawPrice() {
    let s = rect(4, 41, 895, 739, '#626262');
    candles.forEach((c, i) => {
        const x = Math.round(barX(i) - 2.5);
        const y = cloudY(barX(i));
        const next = Math.round(barX(i + 1) - 2.5);
        s += rect(x, y, next - x, 780 - y, 'rgba(0,0,0,.17)');
        if (i < 204 || (i > 228 && i < 348)) s += rect(x, y, 2, 780 - y, 'rgba(0,0,0,.14)');
        s += rect(x, 780 - volume[i], next - x, volume[i], i < 177 ? 'rgba(40,90,85,.25)' : 'rgba(32,78,70,.38)');
    });
    orange.forEach(o => s += rect(o[0], o[2], o[1] - o[0], 1, '#845f3c'));
    candles.forEach((c, i) => {
        const x = Math.round(barX(i));
        const color = within(i, blackRanges) ? '#0a0a0a' : within(i, darkRanges) ? '#083a14' : '#1fa03c';
        s += rect(x, c[0], 1, Math.max(1, c[3] - c[0]), color);
        s += rect(x - 2, c[1], 4, Math.max(1, c[2] - c[1]), color);
    });
    s += line(vwap, '#785d80');
    s += line(slow, '#101010', 1.3);
    s += line(mid, '#173c3d', 1.3);
    s += line(fast, '#989496');
    yellow.forEach(o => s += rect(o[0], o[2], o[1] - o[0], 1, '#e6c200'));
    s += line('963,429 1287,472', '#85696f', 1, 'stroke-dasharray="20 8"');
    s += crosshair(41, 780);
    s += '<path d="M1285 460l8-5v4h9v3h-9v4z" fill="#f00"/>';
    document.getElementById('price').innerHTML = s;
}

function drawTtm() {
    let s = '';
    const tops = {};
    humps.forEach(([start, kind, ys]) => ys.forEach((y, k) => tops[start + k] = [kind, y]));
    for (let i = 0; i < 362; i++) {
        const x = Math.round(barX(i) - 2.5);
        const t = tops[i] || (i < 4 ? ['w', 917] : null);
        if (t) {
            s += rect(x, 918, 5, 3, t[0] === 'w' ? '#cfcfcf' : '#777');
            s += rect(x, t[1], 2, 921 - t[1], t[0] === 'w' ? '#d8d8d8' : '#777');
            if (tops[i + 1]) s += line(`${x + 1},${t[1]} ${x + 6},${tops[i + 1][1]}`, '#868686');
        } else {
            s += rect(x, 918, 5, 3, '#262626') + rect(x, 918, 4, 3, i % 9 < 5 ? '#000' : '#303030');
        }
    }
    redDots.forEach(i => s += `<ellipse cx="${barX(i)}" cy="919" rx="3" ry="3" fill="#f00"/>`);
    document.getElementById('ttm').innerHTML = s + crosshair(805, 922);
}

function drawBull() {
    let s = rect(4, 948, 1832, 1, '#000') + rect(4, 1004, 1832, 1, '#000');
    for (let i = 0; i < 362; i++) {
        const x = Math.round(barX(i) - 2.5);
        const bear = within(i, bearRuns);
        s += rect(x, 974, 5, 5, bear ? '#1e1e1e' : '#696969') + rect(x, 974, 4, 5, bear ? '#000' : '#777');
    }
    document.getElementById('bull').innerHTML = s + crosshair(947, 1005);
}

drawPrice();
drawTtm();
drawBull();
document.getElementById('trades').innerHTML = crosshair(1030, 1080);
```
